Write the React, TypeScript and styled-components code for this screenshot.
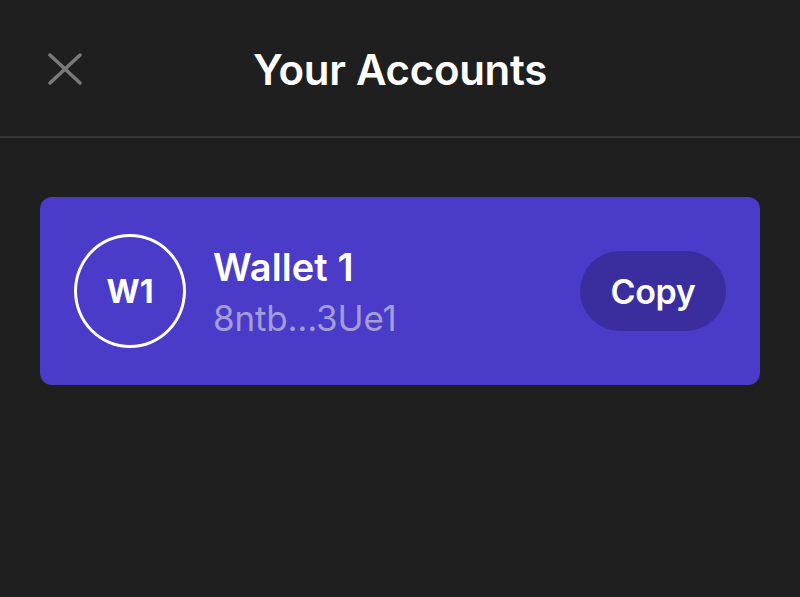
import styled, { createGlobalStyle } from "styled-components";

const GlobalStyle = createGlobalStyle`
    html, body {
        margin: 0;
        padding: 0;
        background-color: #1f1f1f;
    }
    * {
        box-sizing: border-box;
    }
`

const Screen = styled.div`
    width: 800px;
    height: 597px;
    background-color: #1f1f1f;
    font-family: 'Inter', 'Noto Sans', sans-serif;
    color: #fff;
    overflow: hidden;
`

const Header = styled.header`
    height: 138px;
    display: grid;
    grid-template-columns: 120px 1fr 120px;
    align-items: center;
    padding-top: 2px;
    border-bottom: 2px solid #363636;
`

const CloseButton = styled.button`
    background: none;
    border: none;
    padding: 0;
    margin-left: 48px;
    width: 34px;
    height: 32px;
    display: flex;
    align-items: center;
    justify-content: center;
    cursor: pointer;
`

const Title = styled.h1`
    margin: 0;
    text-align: center;
    font-size: 42px;
    font-weight: 600;
    letter-spacing: -0.3px;
    color: #fff;
`

const Content = styled.main`
    padding: 59px 40px 0;
`

const AccountCard = styled.div`
    height: 188px;
    background-color: #4a3bc8;
    border-radius: 12px;
    display: flex;
    align-items: center;
    padding: 0 34px;
`

const Avatar = styled.div`
    width: 112px;
    height: 114px;
    border-radius: 50%;
    border: 3px solid #fff;
    display: flex;
    align-items: center;
    justify-content: center;
    font-size: 32px;
    font-weight: 700;
    flex-shrink: 0;
`

const Info = styled.div`
    flex: 1;
    display: flex;
    flex-direction: column;
    gap: 7px;
    margin-left: 27px;
`

const Name = styled.div`
    font-size: 38px;
    font-weight: 600;
    letter-spacing: 0.1px;
`

const Address = styled.div`
    font-size: 35px;
    font-weight: 400;
    color: #a39dd8;
    letter-spacing: -0.2px;
`

const CopyButton = styled.button`
    width: 146px;
    height: 80px;
    border: none;
    border-radius: 40px;
    background-color: #3a2e9f;
    color: #fff;
    font-family: inherit;
    font-size: 34px;
    font-weight: 600;
    letter-spacing: -0.3px;
    cursor: pointer;
`

export default function App() {
    return (
        <Screen>
            <GlobalStyle />
            <Header>
                <CloseButton aria-label="close">
                    <svg width="34" height="32" viewBox="0 0 34 32">
                        <path d="M2 2 L32 30 M32 2 L2 30" stroke="#7a7a7a" strokeWidth="3.5" strokeLinecap="round" />
                    </svg>
                </CloseButton>
                <Title>Your Accounts</Title>
                <div />
            </Header>
            <Content>
                <AccountCard>
                    <Avatar>W1</Avatar>
                    <Info>
                        <Name>Wallet 1</Name>
                        <Address>8ntb...3Ue1</Address>
                    </Info>
                    <CopyButton>Copy</CopyButton>
                </AccountCard>
            </Content>
        </Screen>
    );
}
